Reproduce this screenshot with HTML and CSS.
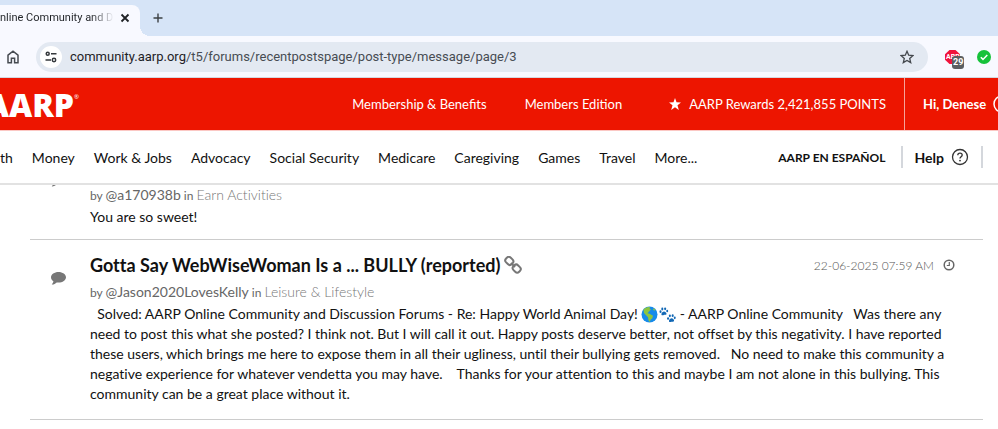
FILE: index.html
```html
<!DOCTYPE html>
<html lang="en">
<head>
<meta charset="utf-8">
<meta name="viewport" content="width=device-width, initial-scale=1">
<title>AARP Online Community and Discussion Forums</title>
<link rel="stylesheet" href="styles.css">
</head>
<body>
<div class="tabstrip">
  <div class="tab">
    <span class="tab-title">nline Community and D</span>
    <button class="icon-btn" aria-label="Close tab"><svg width="10" height="10" viewBox="0 0 10 10"><path d="M1.5 1.5l7 7M8.500 1.500l-7 7" stroke="#1f2226" stroke-width="1.8" fill="none"/></svg></button>
  </div>
  <button class="icon-btn new-tab" aria-label="New tab"><svg width="10" height="10" viewBox="0 0 10 10"><path d="M5 .5v9M.5 5h9" stroke="#3c4043" stroke-width="1.4" fill="none"/></svg></button>
</div>
<div class="toolbar">
  <button class="icon-btn" aria-label="Home"><svg width="12" height="14" viewBox="0 0 12 14"><path d="M1 5.200L6 1.200l5 4V12.800H7.600V8.300H4.400v4.500H1z" stroke="#454a50" stroke-width="1.500" fill="none"/></svg></button>
  <div class="omnibox">
    <button class="site-info" aria-label="View site information"><svg width="12" height="12" viewBox="0 0 12 12"><g stroke="#34383c" stroke-width="1.500" fill="none"><circle cx="2.700" cy="2.800" r="1.500"/><path d="M6 2.800h5.500M.5 9h5.500"/><circle cx="9" cy="9" r="1.700"/></g></svg></button>
    <div class="url"><span class="host">community.aarp.org</span><span>/t5/forums/recentpostspage/post-type/message/page/3</span></div>
    <button class="icon-btn" aria-label="Bookmark this tab"><svg width="14" height="14" viewBox="0 0 14 14"><path d="M7 1.300l1.700 3.900 4.200.4-3.200 2.800 1 4.200L7 10.400l-3.700 2.200 1-4.200L1.100 5.600l4.200-.4z" stroke="#44484d" stroke-width="1.300" fill="none"/></svg></button>
  </div>
  <div class="extensions">
    <button class="icon-btn abp" aria-label="Adblock Plus"><svg width="16" height="14" viewBox="0 0 16 14"><path d="M4.500 0h6L15 4.200v5.600L10.500 14h-6L0 9.800V4.200z" fill="#f0143c"/></svg><span class="abp-text">ABP</span><span class="badge">29</span></button>
    <button class="icon-btn" aria-label="Site safety"><svg width="14" height="14" viewBox="0 0 14 14"><circle cx="7" cy="7" r="7" fill="#16c23a"/><path d="M3.800 7.200l2.200 2.200 4.300-4.400" stroke="#fff" stroke-width="1.500" fill="none"/></svg></button>
  </div>
</div>
<header>
  <div class="red-bar">
    <a class="logo" href="#">AARP<sup>®</sup></a>
    <nav class="member-links" aria-label="Membership">
      <a href="#">Membership &amp; Benefits</a>
      <a href="#">Members Edition</a>
      <a class="rewards" href="#"><svg width="12" height="12" viewBox="0 0 12 12"><path d="M6 0l1.500 4.300 4.500.2-3.500 2.800L9.800 12 6 9.200 2.200 12l1.300-4.700L0 4.500l4.500-.2z" fill="#fff"/></svg>AARP Rewards 2,421,855 POINTS</a>
    </nav>
    <a class="account" href="#">Hi, Denese<svg width="18" height="18" viewBox="0 0 18 18"><circle cx="9" cy="9" r="8" fill="none" stroke="#fff" stroke-width="1.500"/></svg></a>
  </div>
  <div class="site-nav">
    <nav class="topics" aria-label="Topics">
      <a href="#">th</a><a href="#">Money</a><a href="#">Work &amp; Jobs</a><a href="#">Advocacy</a><a href="#">Social Security</a><a href="#">Medicare</a><a href="#">Caregiving</a><a href="#">Games</a><a href="#">Travel</a><a href="#">More...</a>
    </nav>
    <div class="nav-tools">
      <a class="spanish" href="#">AARP EN ESPAÑOL</a>
      <a class="help" href="#">Help<svg width="18" height="18" viewBox="0 0 18 18"><circle cx="9" cy="9" r="7.500" fill="none" stroke="#333" stroke-width="1.300"/><path d="M6.800 7.200c0-1.400 1-2.100 2.200-2.100s2.200.8 2.200 1.900c0 1.700-2.200 1.700-2.200 3.400" fill="none" stroke="#333" stroke-width="1.300"/><circle cx="9" cy="12.600" r=".9" fill="#333"/></svg></a>
    </div>
  </div>
</header>
<main>
  <article class="post post-first">
    <svg class="bubble" width="15" height="13" viewBox="0 0 15 13"><path d="M7.500 0C11.600 0 15 2.300 15 5.200s-3.400 5.300-7.500 5.300c-.6 0-1.200 0-1.800-.1C4.400 11.500 3 12.300 1.200 12.600c-.4 0-.5-.3-.2-.6.700-.7 1.300-1.400 1.400-2.700C.9 8.300 0 6.800 0 5.200 0 2.300 3.400 0 7.500 0z"/></svg>
    <div class="post-content">
      <p class="meta">by <a class="author" href="#">@a170938b</a> in <a class="board" href="#">Earn Activities</a></p>
      <p class="body">You are so sweet!</p>
    </div>
  </article>
  <article class="post">
    <svg class="bubble" width="15" height="13" viewBox="0 0 15 13"><path d="M7.500 0C11.600 0 15 2.300 15 5.200s-3.400 5.300-7.500 5.300c-.6 0-1.200 0-1.800-.1C4.400 11.500 3 12.300 1.200 12.600c-.4 0-.5-.3-.2-.6.700-.7 1.300-1.400 1.400-2.700C.9 8.300 0 6.800 0 5.200 0 2.300 3.400 0 7.500 0z"/></svg>
    <div class="post-content">
      <div class="heading">
        <h2><a href="#">Gotta Say WebWiseWoman Is a ... BULLY (reported)</a></h2>
        <svg width="18" height="18" viewBox="0 0 18 18"><g fill="none" stroke="#777" stroke-width="2"><rect x="1.300" y="1.600" width="8" height="6.600" rx="2.800" transform="rotate(45 5.300 4.900)"/><rect x="8.700" y="9.300" width="8" height="6.600" rx="2.800" transform="rotate(45 12.700 12.600)"/><path d="M7 7l4 4"/></g></svg>
        <time datetime="2025-06-22T07:59">22-06-2025 07:59 AM<svg width="12" height="12" viewBox="0 0 12 12"><circle cx="6" cy="6" r="4.800" fill="none" stroke="#666" stroke-width="1.500"/><path d="M6.300 3v3.500H3.800" fill="none" stroke="#666" stroke-width="1.200"/></svg></time>
      </div>
      <p class="meta">by <a class="author" href="#">@Jason2020LovesKelly</a> in <a class="board" href="#">Leisure &amp; Lifestyle</a></p>
      <p class="body">&nbsp; Solved: AARP Online Community and Discussion Forums - Re: Happy World Animal Day! <svg class="emoji" width="17" height="17" viewBox="0 0 17 17" role="img" aria-label="Globe"><circle cx="8.500" cy="8.500" r="8" fill="#168bea"/><path d="M2.500 3.500C4 1.500 6.500.7 9 1l-.5 1.500 1.500 1L8 5.500 6.500 7.200l2 .5 3.500 2-.7 2.600-1.800 1.400-.6 2.300-1.400-1.500-.5-3.200L4.800 9 3 7z" fill="#8cc53f"/><path d="M12.500 2.200l2 1.600-1 .9-1.500-.9z" fill="#8cc53f"/></svg> <svg class="emoji" width="17" height="17" viewBox="0 0 18 17" role="img" aria-label="Paw prints"><g fill="#1268b5"><g id="paw"><path d="M5.200 5.300c1.500 0 3.200 1.700 2.700 3-.4.900-1.500.4-2.600.6-1.100.2-2 .9-2.600 0C2 7.700 3.500 5.400 5.200 5.300z"/><ellipse cx="1.600" cy="5.500" rx="1.100" ry="1.400"/><ellipse cx="3.500" cy="2.700" rx="1.100" ry="1.500"/><ellipse cx="6.500" cy="2.500" rx="1.100" ry="1.500"/><ellipse cx="8.700" cy="4.800" rx="1" ry="1.400"/></g><use href="#paw" x="8" y="7.200"/></g></svg> - AARP Online Community &nbsp; Was there any need to post this what she posted? I think not. But I will call it out. Happy posts deserve better, not offset by this negativity. I have reported these users, which brings me here to expose them in all their ugliness, until their bullying gets removed. &nbsp; No need to make this community a negative experience for whatever vendetta you may have. &nbsp;&nbsp; Thanks for your attention to this and maybe I am not alone in this bullying. This community can be a great place without it.</p>
    </div>
  </article>
</main>
</body>
</html>
```
FILE: styles.css
```css
* { box-sizing: border-box; }
body {
  margin: 0;
  overflow: hidden;
  background: #fff;
  color: #111;
  font-family: Lato, "Liberation Sans", sans-serif;
  font-size: 14px;
}
a { color: inherit; text-decoration: none; white-space: nowrap; }
p, h2 { margin: 0; }
svg { flex: none; display: block; }
button {
  border: 0;
  padding: 0;
  background: none;
  font: inherit;
  color: inherit;
}
.icon-btn { display: flex; align-items: center; flex: none; }

/* Browser chrome */
.tabstrip {
  display: flex;
  align-items: flex-end;
  height: 36px;
  background: #d6e4f7;
  font: 11px Roboto, sans-serif;
}
.tab {
  position: relative;
  display: flex;
  align-items: center;
  gap: 6px;
  width: 140px;
  height: 31px;
  padding: 0 10px 6px 0;
  border-radius: 0 8px 0 0;
  background: #f8f9ff;
}
.tab::after {
  content: "";
  position: absolute;
  left: 100%;
  bottom: 0;
  width: 10px;
  height: 10px;
  background: radial-gradient(circle at 100% 0, transparent 10px, #f8f9ff 10px);
}
.tab-title {
  flex: 1;
  overflow: hidden;
  white-space: nowrap;
  background: linear-gradient(90deg, #1f2226 80%, transparent);
  background-clip: text;
  color: transparent;
}
.new-tab { align-self: center; margin-left: 13px; }
.toolbar {
  display: flex;
  align-items: center;
  gap: 17px;
  height: 42px;
  padding: 0 7px;
  border-bottom: 1px solid #d5d8e0;
  background: #f8f9ff;
}
.omnibox {
  display: flex;
  align-items: center;
  flex: 1;
  gap: 8px;
  height: 30px;
  padding: 0 14px 0 4px;
  border-radius: 15px;
  background: #e3e9f2;
  font: 13px Roboto, sans-serif;
}
.site-info {
  display: flex;
  align-items: center;
  justify-content: center;
  width: 22px;
  height: 22px;
  border-radius: 50%;
  background: #fff;
}
.url { flex: 1; color: #474c52; white-space: nowrap; }
.host { color: #1f2226; }
.extensions { display: flex; align-items: center; gap: 16px; }
.abp { position: relative; }
.abp-text {
  position: absolute;
  left: 1px;
  color: #fff;
  font: bold 7px Roboto, sans-serif;
}
.badge {
  position: absolute;
  left: 7px;
  top: 6px;
  padding: 0 1px;
  border-radius: 3px;
  background: #5b5e61;
  color: #fff;
  font: bold 9px/13px Roboto, sans-serif;
}

/* Site header */
.red-bar {
  display: flex;
  align-items: center;
  height: 53px;
  overflow: hidden;
  border-bottom: 1px solid #fbc8c4;
  background: #ed1500;
  color: #fff;
}
.logo {
  display: flex;
  justify-content: flex-end;
  width: 79px;
  font: 800 32px "Open Sans", sans-serif;
}
.logo sup { font-size: 6px; font-weight: 400; line-height: 28px; }
.member-links {
  display: flex;
  flex: 1;
  justify-content: flex-end;
  gap: 38px;
  padding-right: 18px;
  font-size: 13px;
}
.member-links .rewards { display: flex; align-items: center; gap: 8px; margin-left: 9px; }
.account {
  display: flex;
  align-items: center;
  gap: 7px;
  width: 94px;
  height: 52px;
  padding-left: 18px;
  border-left: 1px solid #f6a29a;
  font-size: 13px;
  font-weight: bold;
}
.site-nav {
  display: flex;
  align-items: center;
  justify-content: space-between;
  height: 54px;
  padding-right: 15px;
  border-bottom: 2px solid #e2e2e2;
}
.topics { display: flex; gap: 19px; }
.nav-tools { display: flex; align-items: center; gap: 15px; }
.spanish { font-size: 12px; font-weight: bold; }
.help {
  display: flex;
  align-items: center;
  gap: 7px;
  height: 22px;
  padding: 0 12px;
  border: solid #d4d7dc;
  border-width: 0 2px;
  font-weight: bold;
}

/* Posts */
main { padding: 0 15px 0 30px; font-variant-ligatures: none; }
.post {
  display: grid;
  grid-template-columns: 60px 1fr;
  padding: 12px 28px 15px 0;
  border-bottom: 1px solid #ccc;
}
.post-first { padding-top: 0; padding-bottom: 12px; overflow: hidden; }
.bubble { justify-self: center; margin: 20px 3px 0 0; fill: #777; }
.post-first .bubble { margin-top: -11px; }
.heading { display: flex; align-items: center; gap: 4px; min-height: 26px; margin-bottom: 4px; }
.heading h2 { font-size: 18px; line-height: 26px; }
time {
  display: flex;
  align-items: center;
  gap: 9px;
  margin-left: auto;
  color: #555;
  font-size: 12px;
  font-weight: 300;
  white-space: nowrap;
}
.meta { color: #666; font-size: 12px; line-height: 20px; }
.author { font-size: 14px; }
.board { color: #777; font-size: 14px; font-weight: 300; }
.body { margin-top: 1px; line-height: 20px; }
.emoji { display: inline-block; vertical-align: -4px; }
.emoji + .emoji { margin-left: -3px; }
```
